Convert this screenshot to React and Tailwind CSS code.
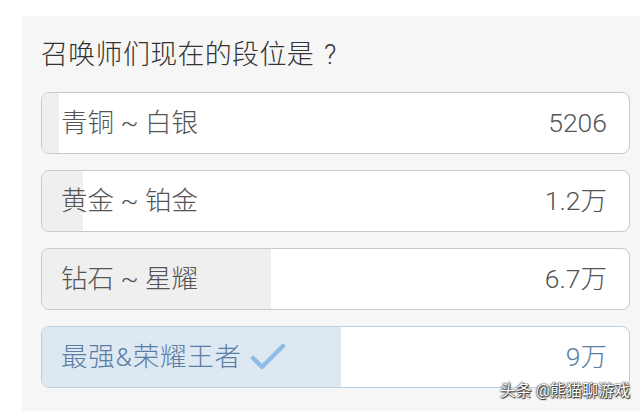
export default function App() {
  const font = { fontFamily: 'Roboto, "Noto Sans CJK SC", "Noto Sans", sans-serif' };
  const rows = [
    { label: "青铜 ~ 白银", value: "5206", fill: 17 },
    { label: "黄金 ~ 铂金", value: "1.2万", fill: 41 },
    { label: "钻石 ~ 星耀", value: "6.7万", fill: 229 },
  ];
  return (
    <div className="w-[640px] h-[411px] bg-white pt-4 pl-[22px] overflow-hidden" style={font}>
      <div className="h-full bg-[#f6f6f6] pl-[19px] pr-[10px] relative">
        <div className="pt-[20px] h-[76px] text-[27px] leading-[38px] text-[#333] font-light tracking-[0.3px]">
          召唤师们现在的段位是<span className="ml-[10px]">?</span>
        </div>
        <div className="flex flex-col gap-4">
          {rows.map((r) => (
            <div key={r.label} className="relative h-[62px] rounded-lg border border-[#c9c9c9] bg-white overflow-hidden">
              <div className="absolute left-0 top-0 bottom-0 bg-[#efefef]" style={{ width: r.fill }} />
              <div className="relative flex h-full items-center justify-between pl-[19px] pr-[22px] text-[26.5px] text-[#555] font-light">
                <span>{r.label}</span>
                <span>{r.value}</span>
              </div>
            </div>
          ))}
          <div className="relative h-[62px] rounded-lg border border-[#b7d0e6] bg-white overflow-hidden">
            <div className="absolute left-0 top-0 bottom-0 bg-[#dde8f3]" style={{ width: 299 }} />
            <div className="relative flex h-full items-center justify-between pl-[19px] pr-[22px] text-[26.5px] text-[#5a7ea4] font-light">
              <span className="flex items-center">
                <span className="tracking-[0.8px]">最强&amp;荣耀王者</span>
                <svg width="36" height="30" viewBox="0 0 36 30" className="ml-[8px]">
                  <path d="M3 16 L12 25 L33 4" fill="none" stroke="#8fbde6" strokeWidth="4.5" strokeLinecap="round" strokeLinejoin="round" />
                </svg>
              </span>
              <span>9万</span>
            </div>
          </div>
        </div>
        <div className="absolute right-[10px] top-[365px] text-[16px] leading-[20px] text-white" style={{ textShadow: "0 0 2px #222, 0 0 1px #222, 1px 1px 1px #333" }}>
          头条 @熊猫聊游戏
        </div>
      </div>
    </div>
  );
}
